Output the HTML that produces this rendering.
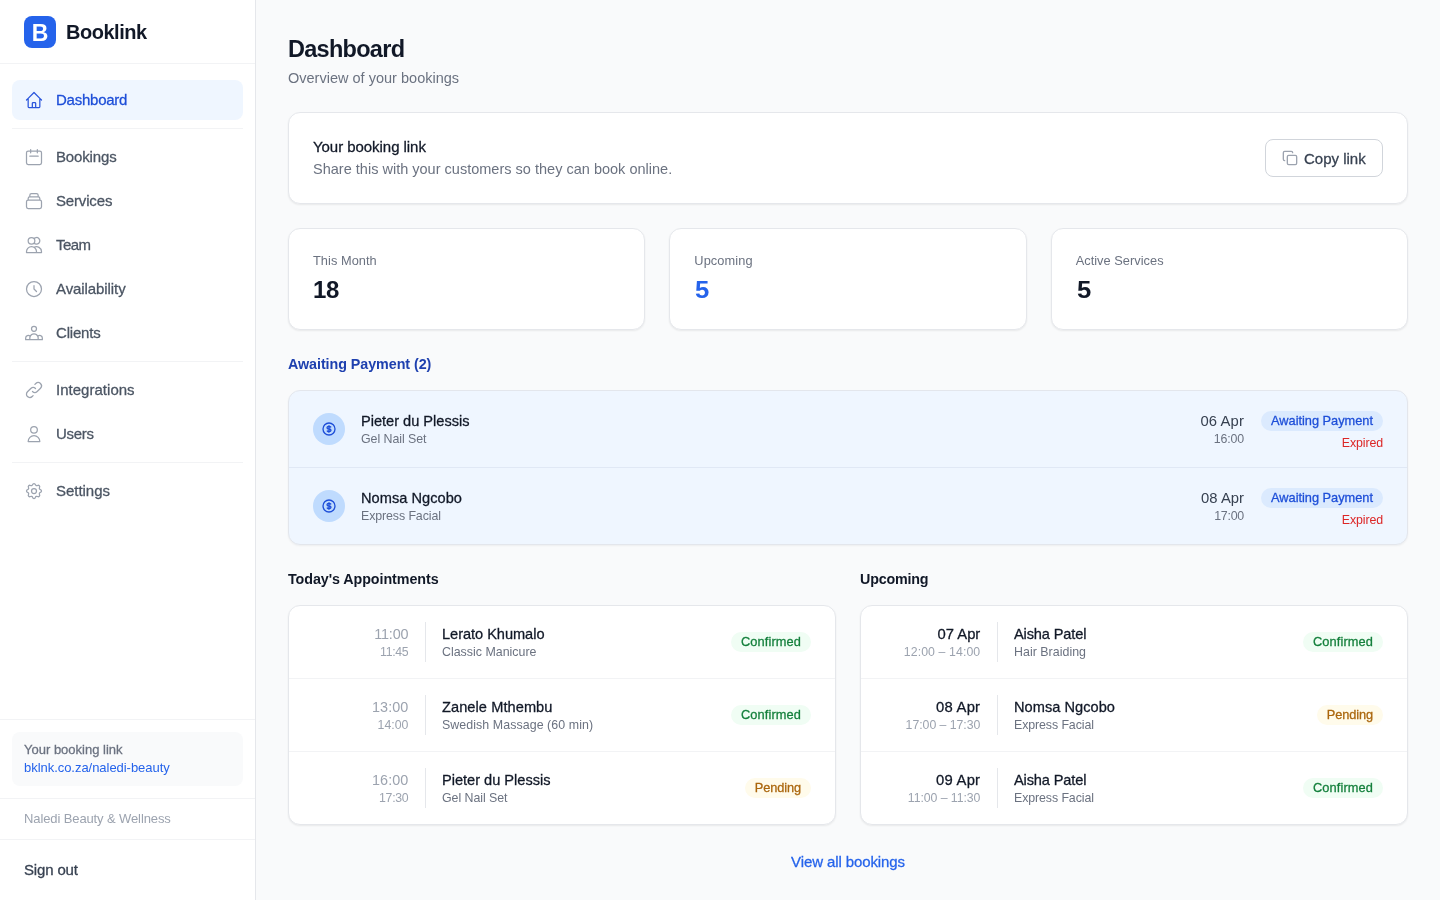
<!DOCTYPE html>
<html lang="en"><head>
<meta charset="utf-8">
<title>Booklink – Dashboard</title>
<style>
*{box-sizing:border-box;margin:0;padding:0}
html,body{width:1440px;height:900px;overflow:hidden}
body{font-family:"Liberation Sans",sans-serif;background:#f9fafb;color:#111827;-webkit-font-smoothing:antialiased}
a{text-decoration:none;color:inherit}
.side,.main{will-change:transform}
.med{-webkit-text-stroke:0.28px currentColor}
.semi{font-weight:700}

/* sidebar */
.side{position:absolute;left:0;top:0;width:256px;height:900px;background:#fff;border-right:1px solid #e5e7eb}
.brand{height:64px;border-bottom:1px solid #f2f3f5;display:flex;align-items:center;padding-left:24px}
.logo{width:32px;height:32px;border-radius:8px;background:#2563eb;color:#fff;font-weight:700;font-size:23px;display:flex;align-items:center;justify-content:center;padding-top:3px}
.brand b{font-size:20px;margin-left:10px;color:#111827;letter-spacing:-0.47px;position:relative;top:1px}
.nav{padding:16px 12px 0 12px}
.nav a{display:flex;align-items:center;height:40px;border-radius:8px;padding-left:12px;margin-bottom:4px;font-size:15px;color:#4b5563}
.nav a span{position:relative;top:-1px}
.nav a svg{width:20px;height:20px;margin-right:12px;color:#9ca3af;flex:none}
.nav a.on{background:#eff6ff;color:#1d4ed8}
.nav a.on svg{color:#2a55dc}
.nav hr{border:0;border-top:1px solid #f2f3f5;margin:8px 0 8px 0}
.nav a.pre{margin-bottom:0}
.sb{position:absolute;left:0;right:0;bottom:0}
.sb .sec{border-top:1px solid #f2f3f5}
.blink{margin:12px 12px 12px 12px;background:#f9fafb;border-radius:8px;height:54px;padding:9px 12px 0 12px;font-size:13px;line-height:18px;color:#6b7280}
.blink a{color:#2563eb;display:block}
.org{height:41px;line-height:40px;padding-left:24px;font-size:13px;color:#9ca3af}
.so{height:61px;line-height:60px;padding-left:24px;font-size:15px;color:#374151}

/* main */
.main{position:absolute;left:256px;top:0;width:1184px;height:900px;padding:0 32px}
h1{position:absolute;left:32px;top:33px;font-size:23.5px;line-height:32px;font-weight:700;color:#111827;letter-spacing:-0.75px}
.sub{position:absolute;left:32px;top:68px;font-size:14.5px;line-height:20px;color:#6b7280}
.card{position:absolute;background:#fff;border:1px solid #e5e7eb;border-radius:12px;box-shadow:0 1px 2px rgba(0,0,0,.07)}

.c1t{position:absolute;left:24px;top:24px;font-size:15px;line-height:20px;color:#111827}
.c1s{position:absolute;left:24px;top:46px;font-size:14.5px;line-height:20px;color:#6b7280}
.btn{position:absolute;right:24px;top:26px;height:38px;width:118px;border:1px solid #d1d5db;border-radius:8px;background:#fff;display:flex;align-items:center;padding-left:16px;font-size:15px;color:#374151}
.btn svg{width:16px;height:16px;margin-right:6px;color:#9ca3af}
.stat{height:102px;width:357.33px;top:228px}
.stat .l{position:absolute;left:24px;top:24px;font-size:12.8px;line-height:16px;color:#6b7280}
.stat .n{position:absolute;left:24px;top:45px;font-size:24px;line-height:32px;font-weight:700;color:#111827;transform-origin:0 50%}
.stat .n.w{transform:scaleX(1.07);left:25px}
.hd{position:absolute;font-size:14.3px;line-height:20px;color:#111827}
.aw{position:absolute;left:32px;top:390px;width:1120px;height:155px;background:#eff6ff;border:1px solid #e3e6ec;border-radius:12px;box-shadow:0 1px 2px rgba(0,0,0,.05)}
.aw .r{position:relative;height:76px}
.aw .r+.r{border-top:1px solid #e0e8f5;height:77px}
.dc{position:absolute;left:24px;top:22px;width:32px;height:32px;border-radius:50%;background:#bfdbfe;display:flex;align-items:center;justify-content:center;color:#1d4ed8}
.dc svg{width:16px;height:16px}
.nm{position:absolute;font-size:14.6px;line-height:20px;color:#111827;white-space:nowrap}
.sv{position:absolute;font-size:12.4px;line-height:16px;color:#6b7280;white-space:nowrap}
.aw .nm{left:72px;top:20px}
.aw .sv{left:72px;top:40px}
.aw .dt{position:absolute;right:163px;top:20px;font-size:14.8px;line-height:20px;color:#374151;white-space:nowrap}
.aw .tm{position:absolute;right:163px;top:40px;font-size:12.4px;line-height:16px;color:#6b7280;white-space:nowrap}
.bdg{position:absolute;height:20px;border-radius:10px;font-size:12.8px;line-height:20px;text-align:center;white-space:nowrap}
.aw .bdg{right:24px;top:20px;width:122px;background:#dbeafe;color:#1d4ed8}
.aw .ex{position:absolute;right:24px;top:44px;font-size:12.4px;line-height:16px;color:#dc2626}
.lst{width:548px;height:220px;top:605px}
.lst .r{position:relative;height:72px}
.lst .r+.r{border-top:1px solid #f2f3f5;height:73px}
.lst .t1{position:absolute;left:23.3px;width:96px;top:18px;text-align:right;font-size:14.4px;line-height:20px;color:#9ca3af;white-space:nowrap}
.lst .t1.d{color:#111827;font-size:14.8px}
.lst .t2{position:absolute;left:-0.7px;width:120px;top:36px;text-align:right;font-size:12.3px;line-height:20px;color:#9ca3af;white-space:nowrap}
.lst .vl{position:absolute;left:136px;top:16px;width:1px;height:40px;background:#e5e7eb}
.lst .nm{left:153px;top:18px}
.lst .sv{left:153px;top:36px;line-height:20px}
.lst .bdg{right:24px;top:26px}
.ok{width:80px;background:#f0fdf4;color:#15803d}
.pd{width:66px;background:#fffbeb;color:#ab670e}
.va{position:absolute;left:32px;width:1120px;top:852px;text-align:center;font-size:15px;line-height:20px;color:#2563eb}
</style>
</head>
<body>
<aside class="side">
  <div class="brand"><div class="logo">B</div><b>Booklink</b></div>
  <nav class="nav">
    <a class="on pre"><svg viewBox="0 0 24 24" fill="none" stroke="currentColor" stroke-width="1.5" stroke-linecap="round" stroke-linejoin="round"><path d="M3 12l2-2m0 0l7-7 7 7M5 10v10a1 1 0 001 1h3m10-11l2 2m-2-2v10a1 1 0 01-1 1h-3m-6 0a1 1 0 001-1v-4a1 1 0 011-1h2a1 1 0 011 1v4a1 1 0 001 1m-6 0h6"></path></svg><span class="med" style="letter-spacing: -0.24px;">Dashboard</span></a>
    <hr>
    <a class=""><svg viewBox="0 0 24 24" fill="none" stroke="currentColor" stroke-width="1.5" stroke-linecap="round" stroke-linejoin="round"><path d="M8 7V3m8 4V3m-9 8h10M5 21h14a2 2 0 002-2V7a2 2 0 00-2-2H5a2 2 0 00-2 2v12a2 2 0 002 2z"></path></svg><span class="med" style="letter-spacing: -0.15px;">Bookings</span></a>
    <a class=""><svg viewBox="0 0 24 24" fill="none" stroke="currentColor" stroke-width="1.5" stroke-linecap="round" stroke-linejoin="round"><path d="M19 11H5m14 0a2 2 0 012 2v6a2 2 0 01-2 2H5a2 2 0 01-2-2v-6a2 2 0 012-2m14 0V9a2 2 0 00-2-2M5 11V9a2 2 0 012-2m0 0V5a2 2 0 012-2h6a2 2 0 012 2v2M7 7h10"></path></svg><span class="med" style="letter-spacing: -0.16px;">Services</span></a>
    <a class=""><svg viewBox="0 0 24 24" fill="none" stroke="currentColor" stroke-width="1.5" stroke-linecap="round" stroke-linejoin="round"><path d="M12 4.354a4 4 0 110 5.292M15 21H3v-1a6 6 0 0112 0v1zm0 0h6v-1a6 6 0 00-9-5.197M13 7a4 4 0 11-8 0 4 4 0 018 0z"></path></svg><span class="med" style="letter-spacing: -0.52px;">Team</span></a>
    <a class=""><svg viewBox="0 0 24 24" fill="none" stroke="currentColor" stroke-width="1.5" stroke-linecap="round" stroke-linejoin="round"><path d="M12 8v4l3 3m6-3a9 9 0 11-18 0 9 9 0 0118 0z"></path></svg><span class="med" style="letter-spacing: -0.08px;">Availability</span></a>
    <a class="pre"><svg viewBox="0 0 24 24" fill="none" stroke="currentColor" stroke-width="1.5" stroke-linecap="round" stroke-linejoin="round"><path d="M17 20h5v-2a3 3 0 00-5.356-1.857M17 20H7m10 0v-2c0-.656-.126-1.283-.356-1.857M7 20H2v-2a3 3 0 015.356-1.857M7 20v-2c0-.656.126-1.283.356-1.857m0 0a5.002 5.002 0 019.288 0M15 7a3 3 0 11-6 0 3 3 0 016 0z"></path></svg><span class="med" style="letter-spacing: -0.19px;">Clients</span></a>
    <hr>
    <a class=""><svg viewBox="0 0 24 24" fill="none" stroke="currentColor" stroke-width="1.5" stroke-linecap="round" stroke-linejoin="round"><path d="M13.828 10.172a4 4 0 00-5.656 0l-4 4a4 4 0 105.656 5.656l1.102-1.101m-.758-4.899a4 4 0 005.656 0l4-4a4 4 0 00-5.656-5.656l-1.1 1.1"></path></svg><span class="med" style="letter-spacing: 0.02px;">Integrations</span></a>
    <a class="pre"><svg viewBox="0 0 24 24" fill="none" stroke="currentColor" stroke-width="1.5" stroke-linecap="round" stroke-linejoin="round"><path d="M16 7a4 4 0 11-8 0 4 4 0 018 0zM12 14a7 7 0 00-7 7h14a7 7 0 00-7-7z"></path></svg><span class="med" style="letter-spacing: -0.31px;">Users</span></a>
    <hr>
    <a class=""><svg viewBox="0 0 24 24" fill="none" stroke="currentColor" stroke-width="1.5" stroke-linecap="round" stroke-linejoin="round"><path d="M10.325 4.317c.426-1.756 2.924-1.756 3.35 0a1.724 1.724 0 002.573 1.066c1.543-.94 3.31.826 2.37 2.37a1.724 1.724 0 001.065 2.572c1.756.426 1.756 2.924 0 3.35a1.724 1.724 0 00-1.066 2.573c.94 1.543-.826 3.31-2.37 2.37a1.724 1.724 0 00-2.572 1.065c-.426 1.756-2.924 1.756-3.35 0a1.724 1.724 0 00-2.573-1.066c-1.543.94-3.31-.826-2.37-2.37a1.724 1.724 0 00-1.065-2.572c-1.756-.426-1.756-2.924 0-3.35a1.724 1.724 0 001.066-2.573c-.94-1.543.826-3.31 2.37-2.37.996.608 2.296.07 2.572-1.065z M15 12a3 3 0 11-6 0 3 3 0 016 0z"></path></svg><span class="med" style="letter-spacing: -0.03px;">Settings</span></a>
  </nav>
  <div class="sb">
    <div class="sec"><div class="blink"><span class="med" style="letter-spacing: 0px;">Your booking link</span><a style="letter-spacing: -0.04px;">bklnk.co.za/naledi-beauty</a></div></div>
    <div class="sec org" style="letter-spacing: -0.11px;">Naledi Beauty &amp; Wellness</div>
    <div class="sec so"><span class="med" style="letter-spacing: -0.16px;">Sign out</span></div>
  </div>
</aside>
<main class="main" id="main">
  <h1 style="letter-spacing: -0.72px;">Dashboard</h1>
  <div class="sub" style="letter-spacing: 0.01px;">Overview of your bookings</div>

  <section class="card" style="left:32px;top:112px;width:1120px;height:92px">
    <div class="c1t med" style="letter-spacing: -0.05px;">Your booking link</div>
    <div class="c1s" style="letter-spacing: 0.01px;">Share this with your customers so they can book online.</div>
    <div class="btn"><svg viewBox="0 0 24 24" fill="none" stroke="currentColor" stroke-width="2" stroke-linecap="round" stroke-linejoin="round"><rect width="14" height="14" x="8" y="8" rx="2" ry="2"></rect><path d="M4 16c-1.1 0-2-.9-2-2V4c0-1.1.9-2 2-2h10c1.1 0 2 .9 2 2"></path></svg><span class="med" style="letter-spacing: 0px;">Copy link</span></div>
  </section>
  <section class="card stat" style="left:32px"><div class="l" style="letter-spacing: 0.04px;">This Month</div><div class="n" style="letter-spacing: -0.45px;">18</div></section>
  <section class="card stat" style="left:413.33px"><div class="l" style="letter-spacing: 0.08px;">Upcoming</div><div class="n w" style="color:#2563eb">5</div></section>
  <section class="card stat" style="left:794.67px"><div class="l" style="letter-spacing: 0.03px;">Active Services</div><div class="n w">5</div></section>
  <h2 class="hd semi" style="left: 32px; top: 354px; color: rgb(30, 64, 175); letter-spacing: -0.05px;">Awaiting Payment (2)</h2>
  <section class="aw">
    <div class="r"><div class="dc"><svg viewBox="0 0 24 24" fill="none" stroke="currentColor" stroke-width="2" stroke-linecap="round" stroke-linejoin="round"><path d="M12 8c-1.657 0-3 .895-3 2s1.343 2 3 2 3 .895 3 2-1.343 2-3 2m0-8c1.11 0 2.08.402 2.599 1M12 8V7m0 1v8m0 0v1m0-1c-1.11 0-2.08-.402-2.599-1M21 12a9 9 0 11-18 0 9 9 0 0118 0z"></path></svg></div><div class="nm med" style="letter-spacing: -0.01px;">Pieter du Plessis</div><div class="sv" style="letter-spacing: -0.05px;">Gel Nail Set</div><div class="dt" style="letter-spacing: 0.12px;">06 Apr</div><div class="tm" style="letter-spacing: -0.15px;">16:00</div><div class="bdg med" style="letter-spacing: -0.02px;">Awaiting Payment</div><div class="ex" style="letter-spacing: -0.11px;">Expired</div></div>
    <div class="r"><div class="dc"><svg viewBox="0 0 24 24" fill="none" stroke="currentColor" stroke-width="2" stroke-linecap="round" stroke-linejoin="round"><path d="M12 8c-1.657 0-3 .895-3 2s1.343 2 3 2 3 .895 3 2-1.343 2-3 2m0-8c1.11 0 2.08.402 2.599 1M12 8V7m0 1v8m0 0v1m0-1c-1.11 0-2.08-.402-2.599-1M21 12a9 9 0 11-18 0 9 9 0 0118 0z"></path></svg></div><div class="nm med" style="letter-spacing: 0.03px;">Nomsa Ngcobo</div><div class="sv" style="letter-spacing: -0.1px;">Express Facial</div><div class="dt" style="letter-spacing: 0.02px;">08 Apr</div><div class="tm" style="letter-spacing: -0.24px;">17:00</div><div class="bdg med" style="letter-spacing: -0.02px;">Awaiting Payment</div><div class="ex" style="letter-spacing: -0.11px;">Expired</div></div>
  </section>
  <h2 class="hd semi" style="left: 32px; top: 569px; letter-spacing: -0.07px;">Today's Appointments</h2>
  <section class="card lst" style="left:32px">
    <div class="r"><div class="t1" style="letter-spacing: -0.19px;">11:00</div><div class="t2" style="letter-spacing: -0.32px;">11:45</div><div class="vl"></div><div class="nm med" style="letter-spacing: -0.04px;">Lerato Khumalo</div><div class="sv" style="letter-spacing: 0.01px;">Classic Manicure</div><div class="bdg ok med" style="letter-spacing: 0.11px;">Confirmed</div></div>
    <div class="r"><div class="t1" style="letter-spacing: 0.05px;">13:00</div><div class="t2" style="letter-spacing: -0.01px;">14:00</div><div class="vl"></div><div class="nm med" style="letter-spacing: 0.07px;">Zanele Mthembu</div><div class="sv" style="letter-spacing: 0.07px;">Swedish Massage (60 min)</div><div class="bdg ok med" style="letter-spacing: 0.11px;">Confirmed</div></div>
    <div class="r"><div class="t1" style="letter-spacing: 0.05px;">16:00</div><div class="t2" style="letter-spacing: -0.31px;">17:30</div><div class="vl"></div><div class="nm med" style="letter-spacing: -0.01px;">Pieter du Plessis</div><div class="sv" style="letter-spacing: -0.05px;">Gel Nail Set</div><div class="bdg pd med" style="letter-spacing: -0.1px;">Pending</div></div>
  </section>
  <h2 class="hd semi" style="left: 604px; top: 569px; letter-spacing: -0.19px;">Upcoming</h2>
  <section class="card lst" style="left:604px">
    <div class="r"><div class="t1 d med" style="letter-spacing: -0.01px;">07 Apr</div><div class="t2" style="letter-spacing: 0.1px;">12:00 – 14:00</div><div class="vl"></div><div class="nm med" style="letter-spacing: -0.14px;">Aisha Patel</div><div class="sv" style="letter-spacing: 0.03px;">Hair Braiding</div><div class="bdg ok med" style="letter-spacing: 0.11px;">Confirmed</div></div>
    <div class="r"><div class="t1 d med" style="letter-spacing: 0.24px;">08 Apr</div><div class="t2" style="letter-spacing: -0.04px;">17:00 – 17:30</div><div class="vl"></div><div class="nm med" style="letter-spacing: 0.03px;">Nomsa Ngcobo</div><div class="sv" style="letter-spacing: -0.1px;">Express Facial</div><div class="bdg pd med" style="letter-spacing: -0.1px;">Pending</div></div>
    <div class="r"><div class="t1 d med" style="letter-spacing: 0.24px;">09 Apr</div><div class="t2" style="letter-spacing: -0.07px;">11:00 – 11:30</div><div class="vl"></div><div class="nm med" style="letter-spacing: -0.14px;">Aisha Patel</div><div class="sv" style="letter-spacing: -0.1px;">Express Facial</div><div class="bdg ok med" style="letter-spacing: 0.11px;">Confirmed</div></div>
  </section>
  <a class="va med" style="letter-spacing: -0.11px;">View all bookings</a>
</main>


</body></html>
